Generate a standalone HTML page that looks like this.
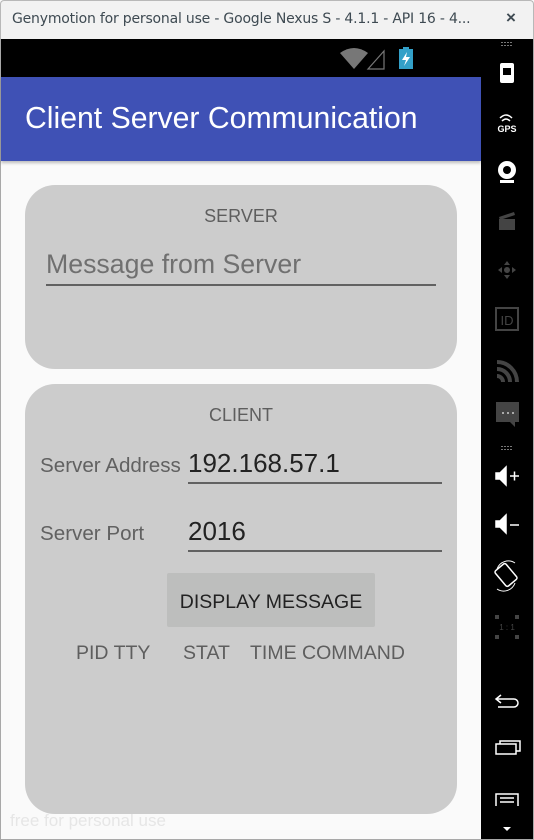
<!DOCTYPE html>
<html><head><meta charset="utf-8"><style>
*{margin:0;padding:0;box-sizing:border-box}
body{width:534px;height:840px;position:relative;overflow:hidden;background:#fafafa;font-family:"Liberation Sans",sans-serif}
.a{position:absolute}
.t{position:absolute;white-space:nowrap}
</style></head><body>
<div class="a" style="left:0;top:0;width:534px;height:39px;background:#f2f2f2;border:1px solid #b8b8b8;border-bottom:none;border-radius:4px 4px 0 0"></div>
<div class="t" style="left:12px;top:11px;font-size:14px;color:#3e4a52;font-family:'DejaVu Sans',sans-serif;letter-spacing:-0.2px">Genymotion for personal use - Google Nexus S - 4.1.1 - API 16 - 4...</div>
<div class="t" style="left:506px;top:8px;font-size:17px;color:#3e4a52;font-weight:bold">×</div>
<div class="a" style="left:0;top:39px;width:1px;height:801px;background:#a8a8a8"></div>
<div class="a" style="left:533px;top:39px;width:1px;height:801px;background:#a8a8a8"></div>
<div class="a" style="left:1px;top:39px;width:480px;height:38px;background:#000"></div>
<svg class="a" style="left:338px;top:45px" width="80" height="26">
<path d="M2 8 Q16 -2 30 8 L16 24 Z" fill="#777"/>
<path d="M30 24 L46 24 L46 6 Z" fill="none" stroke="#777" stroke-width="1.2"/>
<rect x="61" y="4" width="14" height="20" fill="#33a0c8"/><rect x="65" y="2" width="6" height="3" fill="#33a0c8"/>
<path d="M69 7 L64 15 L68 15 L66 21 L72 12 L68 12 Z" fill="#fff"/>
</svg>
<div class="a" style="left:1px;top:77px;width:480px;height:84px;background:#3f51b5;box-shadow:0 2px 3px rgba(0,0,0,.25)"></div>
<div class="t" style="left:25px;top:102px;font-size:30.2px;color:#fff">Client Server Communication</div>
<div class="a" style="left:481px;top:39px;width:52px;height:801px;background:#000"></div>
<svg class="a" style="left:481px;top:39px" width="52" height="801">
<g fill="#777"><rect x="20" y="3" width="2" height="1"/><rect x="23" y="3" width="2" height="1"/><rect x="26" y="3" width="2" height="1"/><rect x="29" y="3" width="2" height="1"/><rect x="20" y="6" width="2" height="1"/><rect x="23" y="6" width="2" height="1"/><rect x="26" y="6" width="2" height="1"/><rect x="29" y="6" width="2" height="1"/></g>
<rect x="19" y="24" width="14" height="20" rx="2" fill="#fff"/><rect x="22" y="29" width="8" height="7" fill="#000"/>
<path d="M19 79 Q25 73 31 79 M21 82 Q25 78 29 82" stroke="#fff" fill="none" stroke-width="1.5"/>
<text x="26" y="93" font-size="9" fill="#fff" font-weight="bold" text-anchor="middle" font-family="Liberation Sans">GPS</text>
<circle cx="26" cy="131" r="9" fill="#fff"/><circle cx="26" cy="131" r="4" fill="#000"/><rect x="19" y="141" width="14" height="3" fill="#fff"/>
<rect x="18" y="180" width="16" height="11" fill="#444"/><path d="M18 178 L33 173 L34 176 L19 181Z" fill="#444"/>
<g fill="#444"><path d="M26 222 l-3 4 h6z M26 240 l-3 -4 h6z M17 231 l4 -3 v6z M35 231 l-4 -3 v6z"/><circle cx="26" cy="231" r="3"/></g>
<rect x="15" y="269" width="22" height="22" fill="none" stroke="#444" stroke-width="2"/><text x="26" y="286" font-size="13" fill="#444" text-anchor="middle" font-family="Liberation Sans">ID</text>
<path d="M16 323 a20 20 0 0 1 20 20 M16 330 a13 13 0 0 1 13 13 M16 337 a6 6 0 0 1 6 6" stroke="#444" stroke-width="4" fill="none"/>
<path d="M15 363 h23 v20 h-4 v5 l-5 -5 h-14z" fill="#444"/><g fill="#aaa"><rect x="21" y="373" width="2" height="2"/><rect x="26" y="373" width="2" height="2"/><rect x="31" y="373" width="2" height="2"/></g>
<g fill="#777"><rect x="20" y="407" width="2" height="1"/><rect x="23" y="407" width="2" height="1"/><rect x="26" y="407" width="2" height="1"/><rect x="29" y="407" width="2" height="1"/><rect x="20" y="410" width="2" height="1"/><rect x="23" y="410" width="2" height="1"/><rect x="26" y="410" width="2" height="1"/><rect x="29" y="410" width="2" height="1"/></g>
<path d="M15 434 h4 l6 -6 v18 l-6 -6 h-4z M29 437 h9 M33.5 432.5 v9" fill="#fff" stroke="#fff" stroke-width="1.5"/>
<path d="M15 482 h4 l6 -6 v18 l-6 -6 h-4z M29 486 h9" fill="#fff" stroke="#fff" stroke-width="1.5"/>
<rect x="18" y="526" width="14" height="20" rx="2" transform="rotate(-40 25 536)" fill="none" stroke="#fff" stroke-width="1.5"/>
<path d="M16 530 a12 12 0 0 1 18 -6 M34 544 a12 12 0 0 1 -18 6" stroke="#fff" fill="none"/>
<text x="26" y="591" font-size="8" fill="#444" text-anchor="middle" font-family="Liberation Sans">1 : 1</text>
<g fill="#444"><rect x="14" y="576" width="4" height="4"/><rect x="34" y="576" width="4" height="4"/><rect x="14" y="596" width="4" height="4"/><rect x="34" y="596" width="4" height="4"/></g>
<path d="M20 656 l-5 4 l5 4 M15 660 h18 a4 4 0 0 1 0 8 h-16" stroke="#fff" fill="none" stroke-width="1.5"/>
<path d="M15 705 h20 v10 h-20z M19 705 v-3 h20 v10 h-4" stroke="#fff" fill="none" stroke-width="1.5"/>
<path d="M15 767 v-12 h22 v12 M19 759 h14 M19 763 h14" stroke="#fff" fill="none" stroke-width="1.5"/>
<path d="M22 788 h8 l-4 4z" fill="#fff"/>
</svg>
<div class="a" style="left:25px;top:185px;width:432px;height:184px;background:#cccccc;border-radius:30px"></div>
<div class="t" style="left:0;width:482px;text-align:center;top:206px;font-size:18px;color:#5e5e5e">SERVER</div>
<div class="t" style="left:46px;top:249px;font-size:26.7px;color:#707070">Message from Server</div>
<div class="a" style="left:46px;top:284px;width:390px;height:2px;background:#616161"></div>
<div class="a" style="left:25px;top:384px;width:432px;height:430px;background:#cccccc;border-radius:30px"></div>
<div class="t" style="left:0;width:482px;text-align:center;top:405px;font-size:18px;color:#5e5e5e">CLIENT</div>
<div class="t" style="left:40px;top:454px;font-size:20.6px;color:#616161">Server Address</div>
<div class="t" style="left:188px;top:448px;font-size:26px;color:#222">192.168.57.1</div>
<div class="a" style="left:188px;top:482px;width:254px;height:2px;background:#616161"></div>
<div class="t" style="left:40px;top:522px;font-size:20.6px;color:#616161">Server Port</div>
<div class="t" style="left:188px;top:516px;font-size:26px;color:#222">2016</div>
<div class="a" style="left:188px;top:550px;width:254px;height:2px;background:#616161"></div>
<div class="a" style="left:167px;top:573px;width:208px;height:54px;background:#bdbebd;border-radius:2px"></div>
<div class="t" style="left:167px;width:208px;text-align:center;top:591px;font-size:19.5px;color:#222">DISPLAY MESSAGE</div>
<div class="t" style="left:76px;top:642px;font-size:19.5px;color:#5e5e5e">PID TTY</div>
<div class="t" style="left:183px;top:642px;font-size:19.5px;color:#5e5e5e">STAT</div>
<div class="t" style="left:250px;top:642px;font-size:19.5px;color:#5e5e5e">TIME COMMAND</div>
<div class="t" style="left:10px;top:811px;font-size:17px;color:#e6e6e6">free for personal use</div>
<div class="a" style="left:0;top:839px;width:534px;height:1px;background:#a8a8a8"></div>
</body></html>
